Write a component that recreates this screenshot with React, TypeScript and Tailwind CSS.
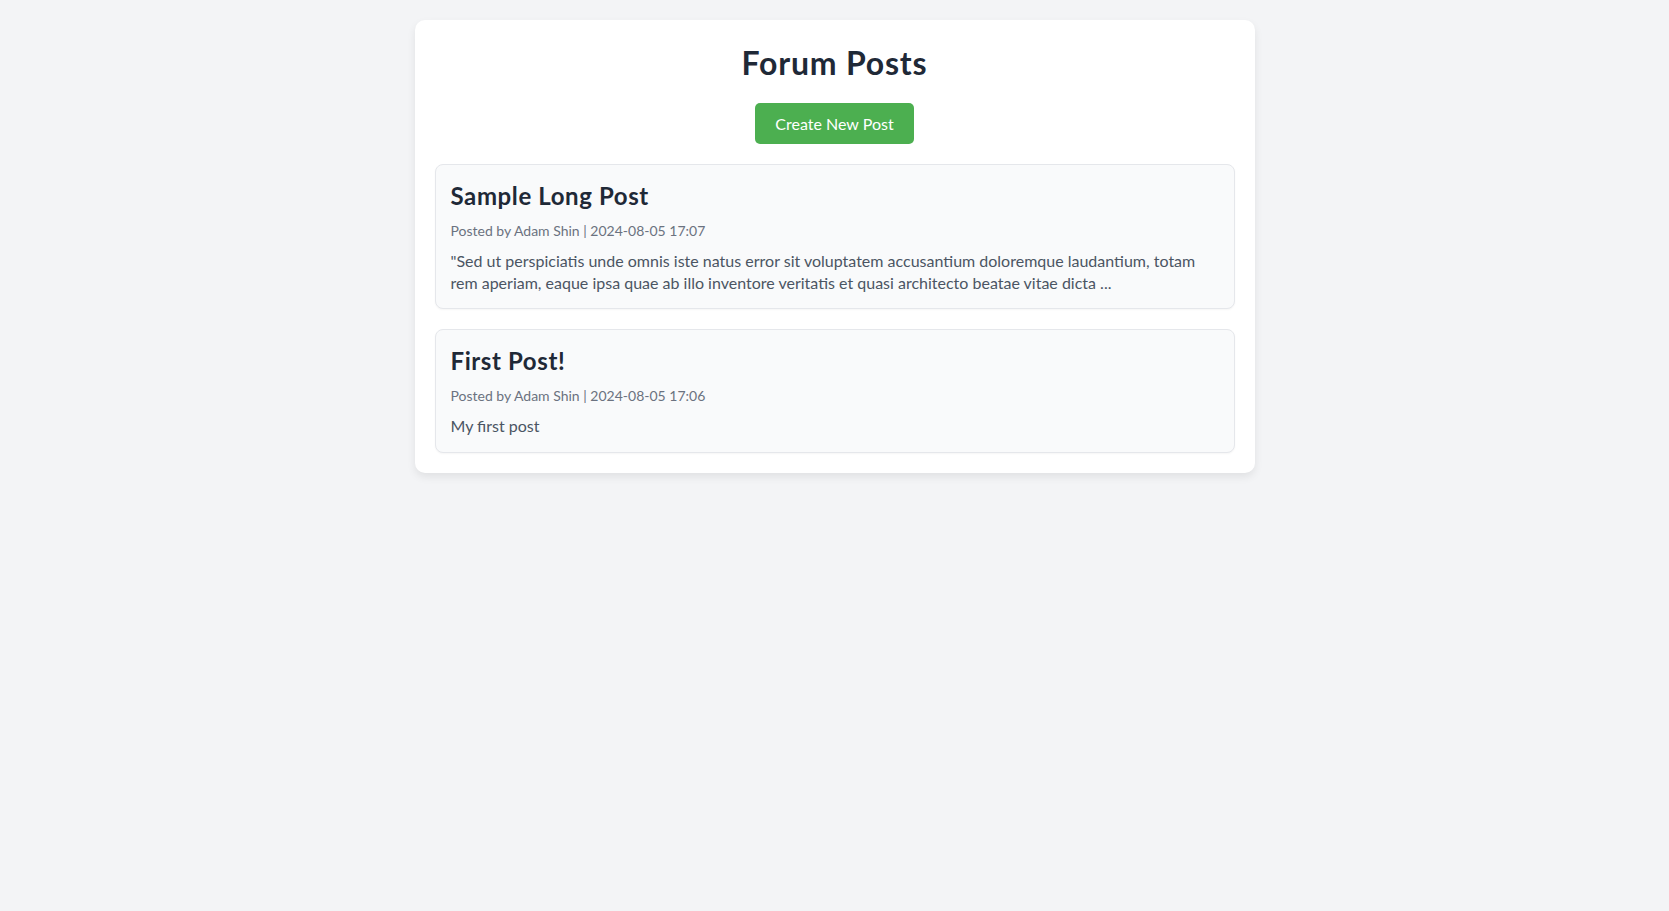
const posts = [
  {
    id: 2,
    title: "Sample Long Post",
    author: "Adam Shin",
    date: "2024-08-05 17:07",
    excerpt:
      '"Sed ut perspiciatis unde omnis iste natus error sit voluptatem accusantium doloremque laudantium, totam rem aperiam, eaque ipsa quae ab illo inventore veritatis et quasi architecto beatae vitae dicta ...',
  },
  {
    id: 1,
    title: "First Post!",
    author: "Adam Shin",
    date: "2024-08-05 17:06",
    excerpt: "My first post",
  },
];

export default function App() {
  return (
    <div className="min-h-screen bg-[#f3f4f6] pt-5 font-['Lato','Liberation_Sans',sans-serif]">
      <div className="mx-auto max-w-[840px] rounded-[10px] bg-white p-5 shadow-[0_4px_8px_rgba(0,0,0,0.08)]">
        {/* Header */}
        <h1 className="mb-[18px] pt-[2px] text-center text-[32px] leading-[1.33] font-bold tracking-[0.025em] text-[#1f2937]">
          Forum Posts
        </h1>
        <div className="mb-5 flex justify-center">
          <button className="rounded-[5px] bg-[#4caf50] px-5 py-[10px] text-base leading-[1.33] text-white hover:bg-[#45a049]">
            Create New Post
          </button>
        </div>

        {/* Post list */}
        <div className="flex flex-col gap-5">
          {posts.map((p) => (
            <div
              key={p.id}
              className="rounded-lg border border-[#e5e7eb] bg-[#f9fafb] p-[15px] shadow-[0_1px_2px_rgba(0,0,0,0.04)]"
            >
              <h3 className="mb-[10px] text-2xl leading-[1.33] font-bold tracking-[0.025em] text-[#1f2937]">
                {p.title}
              </h3>
              <p className="mb-[10px] text-sm leading-[1.33] text-[#6b7280]">
                Posted by {p.author} | {p.date}
              </p>
              <p className="text-base leading-[1.33] text-[#4b5563]">{p.excerpt}</p>
            </div>
          ))}
        </div>
      </div>
    </div>
  );
}
